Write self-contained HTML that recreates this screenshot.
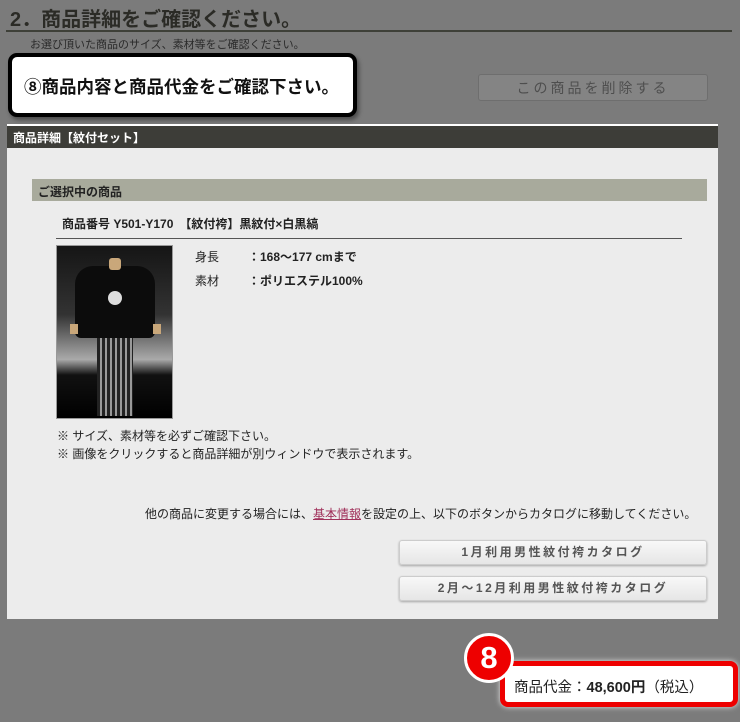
<!DOCTYPE html>
<html><head><meta charset="utf-8"><style>
*{margin:0;padding:0;box-sizing:border-box}
body{width:740px;height:722px;background:#7b7b7b;font-family:"Liberation Sans","Noto Sans CJK JP",sans-serif;position:relative;overflow:hidden;color:#222}
.a{position:absolute}
.h1{left:10px;top:3px;font-size:20px;color:#2b2b26;font-weight:bold;letter-spacing:0}
.hr{left:6px;top:30px;width:726px;height:2px;background:#3e4038}
.sub{left:30px;top:36px;font-size:11px;color:#2a2a2a}
.callout{left:8px;top:53px;width:349px;height:64px;background:#fff;border:4px solid #000;border-radius:9px;box-shadow:2px 3px 4px rgba(0,0,0,.4);font-size:17.5px;font-weight:bold;color:#111;padding:17px 0 0 12px;white-space:nowrap}
.del{left:478px;top:74px;width:230px;height:27px;background:#848484;border:1px solid #6e6e6e;border-radius:3px;color:#4e4e4e;font-size:14px;text-align:center;line-height:26px;letter-spacing:3px}
.panel{left:7px;top:124px;width:711px;height:495px;background:#ececec;border-top:2px solid #fff}
.bar{left:7px;top:126px;width:711px;height:22px;background:#3d3d38;color:#fff;font-size:12px;font-weight:bold;padding:3px 0 0 6px}
.sel{left:32px;top:179px;width:675px;height:22px;background:#a8aa9c;font-size:12px;font-weight:bold;padding:4px 0 0 6px;color:#222}
.pn{left:62px;top:215px;font-size:12px;font-weight:bold}
.line{left:56px;top:238px;width:626px;height:1px;background:#555}
.img{left:56px;top:245px;width:117px;height:174px;background:linear-gradient(#151515 0%,#333 40%,#aaa 66%,#111 75%,#000 100%);border:1px solid #999;overflow:hidden}
.t{font-size:12px}
.btn{width:308px;height:25px;background:linear-gradient(#f8f8f8,#e6e6e6);border:1px solid #ccc;border-radius:3px;box-shadow:0 1px 2px rgba(0,0,0,.3);font-size:12px;font-weight:bold;color:#555;text-align:center;line-height:23px;letter-spacing:2.5px}
.price{left:500px;top:661px;width:238px;height:46px;background:#fff;border:5px solid #e00;border-radius:8px;box-shadow:0 0 6px rgba(255,255,255,.8);font-size:14.5px;padding:10px 0 0 9px;color:#222;white-space:nowrap}
.circ{left:464px;top:633px;width:50px;height:50px;border-radius:50%;background:#e00;border:3px solid #fff;color:#fff;font-size:31px;font-weight:bold;text-align:center;line-height:43px}
</style></head><body>
<div class="a h1">2．商品詳細をご確認ください。</div>
<div class="a hr"></div>
<div class="a sub">お選び頂いた商品のサイズ、素材等をご確認ください。</div>
<div class="a del">この商品を削除する</div>
<div class="a panel"></div>
<div class="a bar">商品詳細【紋付セット】</div>
<div class="a callout">⑧商品内容と商品代金をご確認下さい。</div>
<div class="a sel">ご選択中の商品</div>
<div class="a pn">商品番号 Y501-Y170　【紋付袴】黒紋付×白黒縞</div>
<div class="a line"></div>
<div class="a img">
 <div class="a" style="left:40px;top:60px;width:36px;height:110px;background:repeating-linear-gradient(90deg,#222 0 3px,#999 3px 5px);transform:perspective(100px)"></div>
 <div class="a" style="left:18px;top:20px;width:80px;height:72px;background:#0c0c0c;border-radius:18px 18px 6px 6px"></div>
 <div class="a" style="left:13px;top:78px;width:8px;height:10px;background:#c9a77a"></div>
 <div class="a" style="left:96px;top:78px;width:8px;height:10px;background:#c9a77a"></div>
 <div class="a" style="left:52px;top:12px;width:12px;height:12px;background:#c9a77a;border-radius:3px"></div>
 <div class="a" style="left:51px;top:45px;width:14px;height:14px;background:#ddd;border-radius:50%"></div>
</div>
<div class="a t" style="left:195px;top:248px">身長</div>
<div class="a t" style="left:248px;top:248px;font-weight:bold">：168～177 cmまで</div>
<div class="a t" style="left:195px;top:272px">素材</div>
<div class="a t" style="left:248px;top:272px;font-weight:bold">：ポリエステル100%</div>
<div class="a t" style="left:57px;top:427px">※ サイズ、素材等を必ずご確認下さい。</div>
<div class="a t" style="left:57px;top:445px">※ 画像をクリックすると商品詳細が別ウィンドウで表示されます。</div>
<div class="a t" style="left:145px;top:505px">他の商品に変更する場合には、<span style="color:#a0305a;text-decoration:underline">基本情報</span>を設定の上、以下のボタンからカタログに移動してください。</div>
<div class="a btn" style="left:399px;top:540px">1月利用男性紋付袴カタログ</div>
<div class="a btn" style="left:399px;top:576px">2月～12月利用男性紋付袴カタログ</div>
<div class="a price">商品代金：<b>48,600円</b>（税込）</div>
<div class="a circ">8</div>
</body></html>
